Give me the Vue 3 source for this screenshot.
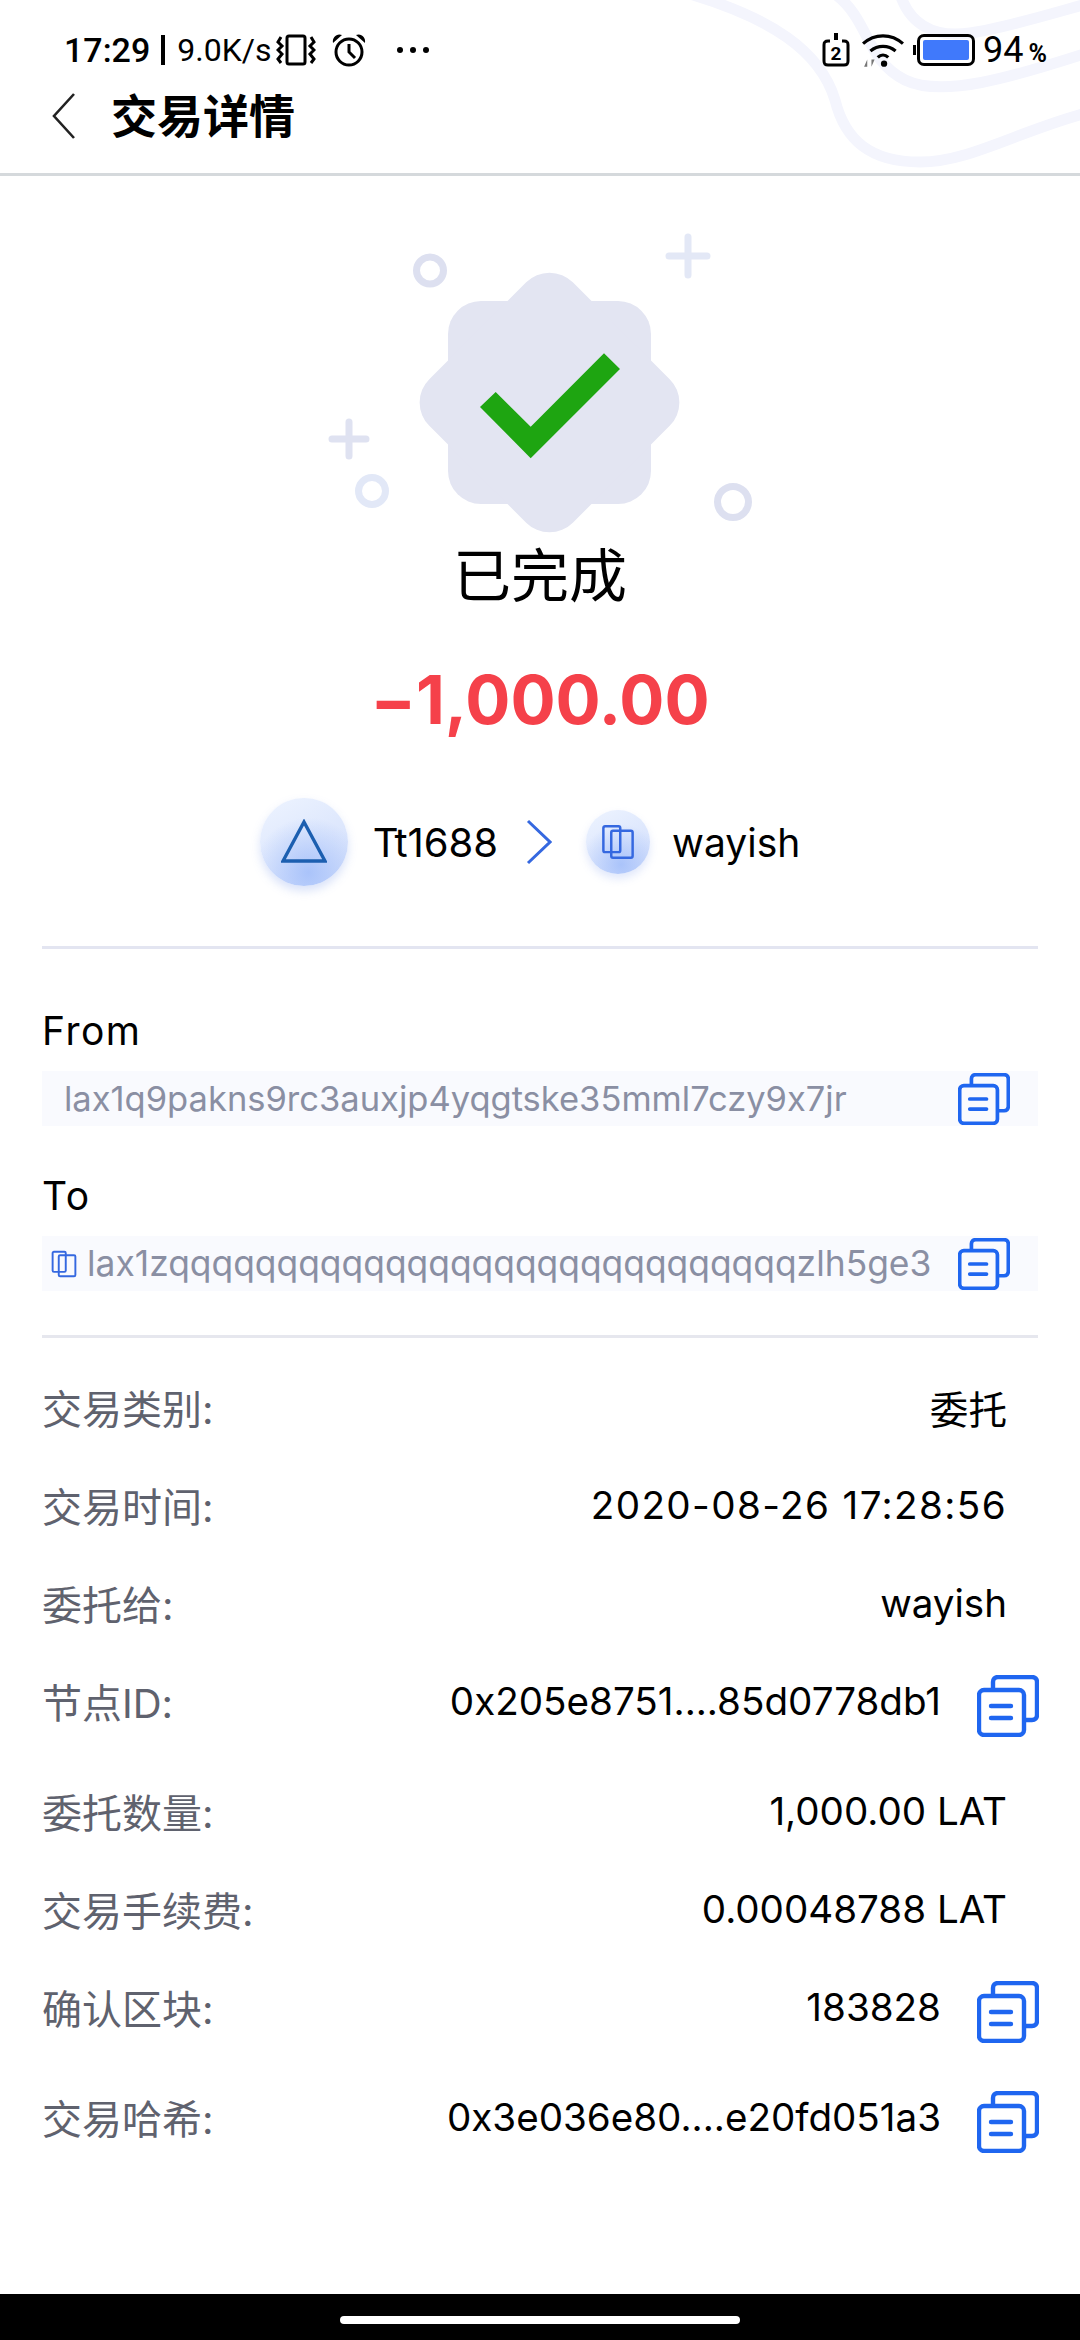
<template>
  <div class="page">
    <svg class="swirl" viewBox="0 0 400 176" aria-hidden="true">
      <path d="M10 -6C90 18 140 50 155 100C165 140 190 162 240 162C290 162 340 130 410 112" />
      <path d="M155 -6C190 20 185 60 225 80C262 98 330 78 410 52" />
      <path d="M220 -6C230 25 255 38 290 33C325 28 370 14 410 3" />
    </svg>

    <div class="status-bar">
      <div class="status-left">
        <span class="clock">17:29</span>
        <span class="pipe"></span>
        <span class="speed">9.0K/s</span>
        <svg class="ic-vibrate" viewBox="0 0 40 32">
          <rect x="11" y="2" width="18" height="28" rx="2" />
          <path d="M5 3L2 8L6 12L2 16L6 20L2 25L5 29M35 3L38 8L34 12L38 16L34 20L38 25L35 29" />
        </svg>
        <svg class="ic-alarm" viewBox="0 0 36 34">
          <circle cx="18" cy="19" r="13" />
          <path d="M18 11V19L24 25" />
          <path class="solid" d="M2 10C1 4 6 0 11 2ZM34 10C35 4 30 0 25 2Z" />
        </svg>
        <span class="dots"><i></i><i></i><i></i></span>
      </div>
      <div class="status-right">
        <svg class="ic-timer" viewBox="0 0 28 34">
          <path d="M8 8H6C3 8 2 9 2 12V28C2 31 3 32 6 32H22C25 32 26 31 26 28V12C26 9 25 8 22 8H20" />
          <path class="solid" d="M12 0H16V7H12Z" />
          <text x="14" y="27" text-anchor="middle">2</text>
        </svg>
        <svg class="ic-wifi" viewBox="0 0 40 32">
          <path d="M1 10C12 0 28 0 39 10M8 17C15 11 25 11 32 17M15 23C18 20 22 20 25 23" />
          <circle class="solid" cx="21" cy="29" r="3" />
          <path class="arrows" d="M5 32V25L2 32ZM9 25V32L12 25Z" />
        </svg>
        <div class="battery"><div class="battery-fill"></div></div>
        <span class="level">94</span>
        <span class="percent">%</span>
      </div>
    </div>

    <header class="title-bar">
      <svg class="back" viewBox="0 0 24 46"><path d="M22 1L2 23L22 45" /></svg>
      <h1>交易详情</h1>
    </header>

    <section class="hero">
      <svg class="hero-art" viewBox="320 225 440 315">
        <rect x="448" y="301" width="203" height="203" rx="33" fill="#e3e5f2" />
        <rect x="448" y="301" width="203" height="203" rx="33" fill="#e3e5f2" transform="rotate(45 549.5 402.5)" />
        <path d="M480 407L495.7 392L530.7 426.7L604 353.3L620 369L530.7 458.3Z" fill="#1ea511" />
        <circle cx="430" cy="270.5" r="13.5" class="ring" stroke="#dde0f0" />
        <circle cx="372" cy="491" r="13.5" class="ring" stroke="#e2e8f7" stroke-width="9" />
        <circle cx="733" cy="502" r="15.5" class="ring" stroke="#dde0f0" />
        <path d="M669 256H707M688 237V275" class="plus" stroke="#e3e8f6" />
        <path d="M332 439H366M349 422V456" class="plus" stroke="#dfe2f1" />
      </svg>
      <p class="state">已完成</p>
      <p class="amount">−1,000.00</p>
      <div class="parties">
        <div class="avatar big">
          <svg viewBox="0 0 46 46"><path d="M23 3L44 42H2Z" /></svg>
        </div>
        <span class="party-name from-name">Tt1688</span>
        <svg class="party-arrow" viewBox="0 0 26 46"><path d="M2 2L24 23L2 44" /></svg>
        <div class="avatar small">
          <svg viewBox="0 0 32 32"><use href="#node-mark" /></svg>
        </div>
        <span class="party-name to-name">wayish</span>
      </div>
    </section>

    <div class="rule"></div>

    <section class="addresses">
      <div class="addr-label">From</div>
      <div class="addr-box">
        <span class="addr-text from-addr">lax1q9pakns9rc3auxjp4yqgtske35mml7czy9x7jr</span>
        <svg class="copy addr-copy" viewBox="0 0 62 62"><use href="#copy-mark" /></svg>
      </div>
      <div class="addr-label to-label">To</div>
      <div class="addr-box">
        <svg class="node-inline" viewBox="0 0 32 32"><use href="#node-mark" /></svg>
        <span class="addr-text to-addr">lax1zqqqqqqqqqqqqqqqqqqqqqqqqqqqqqzlh5ge3</span>
        <svg class="copy addr-copy" viewBox="0 0 62 62"><use href="#copy-mark" /></svg>
      </div>
    </section>

    <div class="rule lower"></div>

    <section class="details">
      <div
        v-for="row in rows"
        :key="row.label"
        class="row"
        :class="{ 'has-copy': row.copy }"
      >
        <span class="row-label">{{ row.label }}</span>
        <span class="row-value" :class="{ 'is-date': row.date }">{{ row.value }}</span>
        <svg v-if="row.copy" class="copy row-copy" viewBox="0 0 62 62"><use href="#copy-mark" /></svg>
      </div>
    </section>

    <div class="nav-bar"><div class="home-pill"></div></div>

    <svg class="defs" width="0" height="0" aria-hidden="true">
      <defs>
        <g id="copy-mark" fill="none" stroke="#1f66f0" stroke-width="4.4" stroke-linejoin="round" stroke-linecap="round">
          <path d="M16 14V7C16 4 18 2 21 2H55C58 2 60 4 60 7V40C60 43 58 45 55 45H48" />
          <rect x="2" y="15" width="45" height="45" rx="5" />
          <path d="M14 31H34M14 43H34" />
        </g>
        <g id="node-mark" fill="none" stroke="#3568e0" stroke-width="2.2" stroke-linejoin="round">
          <rect x="3" y="2" width="15" height="23" rx="1.5" />
          <rect x="10" y="6" width="19" height="24" rx="1.5" />
        </g>
      </defs>
    </svg>
  </div>
</template>

<script setup>
const rows = [
  { label: "交易类别:", value: "委托" },
  { label: "交易时间:", value: "2020-08-26 17:28:56", date: true },
  { label: "委托给:", value: "wayish" },
  { label: "节点ID:", value: "0x205e8751....85d0778db1", copy: true },
  { label: "委托数量:", value: "1,000.00 LAT" },
  { label: "交易手续费:", value: "0.00048788 LAT" },
  { label: "确认区块:", value: "183828", copy: true },
  { label: "交易哈希:", value: "0x3e036e80....e20fd051a3", copy: true },
];
</script>

<style>
html,
body {
  margin: 0;
  background: #fff;
}
</style>

<style scoped>
.page {
  position: relative;
  width: 1080px;
  height: 2340px;
  overflow: hidden;
  display: flex;
  flex-direction: column;
  background: #fff;
  color: #000;
  font-family: "Inter", "Noto Sans CJK SC", sans-serif;
  font-variant-ligatures: none;
  font-feature-settings: "calt" 0;
}

/* 顶部背景装饰 */
.swirl {
  position: absolute;
  top: 0;
  right: 0;
  width: 400px;
  height: 176px;
}

.swirl path {
  fill: none;
  stroke: #f4f5fd;
  stroke-width: 11;
}

.status-bar {
  position: relative;
  height: 72px;
  padding: 30px 33px 0 64px;
  box-sizing: border-box;
  display: flex;
  justify-content: space-between;
}

.status-left,
.status-right {
  display: flex;
  align-items: center;
  height: 40px;
}

.clock {
  font: 500 34px "Roboto", sans-serif;
}

.pipe {
  width: 4px;
  height: 30px;
  margin: 0 12px 0 11px;
  background: #000;
}

.speed {
  font: 400 32px "Roboto", sans-serif;
}

.status-bar svg {
  fill: none;
  stroke: #000;
  stroke-width: 3;
}

.status-bar svg .solid {
  fill: #000;
  stroke: none;
}

.ic-vibrate {
  width: 40px;
  height: 32px;
  margin-left: 5px;
}

.ic-alarm {
  width: 36px;
  height: 34px;
  margin-left: 15px;
}

.dots {
  display: flex;
  gap: 7px;
  margin-left: 30px;
}

.dots i {
  width: 6px;
  height: 6px;
  border-radius: 50%;
  background: #000;
}

.ic-timer {
  width: 28px;
  height: 34px;
}

.ic-timer text {
  font: 700 19px "Roboto", sans-serif;
  fill: #000;
  stroke: none;
}

.ic-wifi {
  width: 42px;
  height: 34px;
  margin-left: 12px;
}

.status-bar svg .arrows {
  fill: #777;
  stroke: none;
}

.battery {
  position: relative;
  width: 58px;
  height: 32px;
  margin-left: 13px;
  padding: 3px;
  box-sizing: border-box;
  border: 3px solid #000;
  border-radius: 7px;
}

.battery::before {
  content: "";
  position: absolute;
  left: -7px;
  top: 8px;
  width: 3px;
  height: 10px;
  background: #000;
}

.battery-fill {
  height: 100%;
  border-radius: 2px;
  background: #4079fb;
}

.level {
  margin-left: 8px;
  font: 400 36px "Roboto", sans-serif;
}

.percent {
  margin: 6px 0 0 5px;
  font: 700 25px "Roboto", sans-serif;
}

.title-bar {
  position: relative;
  height: 104px;
  box-sizing: border-box;
  display: flex;
  align-items: center;
  padding: 0 0 14px 52px;
  border-bottom: 3px solid #d5d9dc;
}

.back {
  width: 24px;
  height: 46px;
  fill: none;
  stroke: #222;
  stroke-width: 2.6;
}

.title-bar h1 {
  margin: 0 0 0 35px;
  font-size: 46px;
  font-weight: 700;
  line-height: 60px;
}

.hero {
  display: flex;
  flex-direction: column;
  align-items: center;
}

.hero-art {
  width: 440px;
  height: 315px;
  margin-top: 49px;
  flex: none;
}

.ring {
  fill: none;
  stroke-width: 7;
}

.plus {
  fill: none;
  stroke-width: 7;
  stroke-linecap: round;
}

.state {
  margin: 4px 0 0;
  font-size: 58px;
  line-height: 64px;
}

.amount {
  margin: 51px 0 0;
  font-size: 67px;
  line-height: 82px;
  font-weight: 700;
  color: #f5414a;
}

.parties {
  display: flex;
  align-items: center;
  margin: 56px 20px 0 0;
  height: 90px;
}

.avatar {
  display: flex;
  align-items: center;
  justify-content: center;
  border-radius: 50%;
  background:
    radial-gradient(circle at 55% 85%, rgba(165, 192, 250, 0.9), transparent 62%),
    linear-gradient(150deg, #eef4ff, #cfdcfb);
}

.avatar.big {
  width: 88px;
  height: 88px;
  box-shadow: 0 5px 10px rgba(120, 150, 235, 0.28);
}

.avatar.big svg {
  width: 46px;
  height: 46px;
  fill: none;
  stroke: #1c5fb0;
  stroke-width: 3.4;
}

.avatar.small {
  width: 64px;
  height: 64px;
  box-shadow: 0 5px 9px rgba(120, 150, 235, 0.22);
}

.avatar.small svg {
  width: 36px;
  height: 36px;
}

.party-name {
  font-size: 40px;
}

.from-name {
  margin-left: 25px;
}

.party-arrow {
  width: 26px;
  height: 46px;
  margin: 0 34px 0 28px;
  fill: none;
  stroke: #3568e0;
  stroke-width: 3;
}

.to-name {
  margin-left: 22px;
  font-size: 39px;
}

.rule {
  height: 3px;
  margin: 59px 42px 0;
  background: #e3e5f1;
  flex: none;
}

.rule.lower {
  margin-top: 44px;
  background: #e6e7ee;
}

.addresses {
  padding: 0 42px;
}

.addr-label {
  margin-top: 57px;
  font-size: 39px;
  line-height: 50px;
  letter-spacing: 1.5px;
}

.to-label {
  margin-top: 45px;
}

.addr-box {
  display: flex;
  align-items: center;
  height: 55px;
  margin-top: 15px;
  background: #f9fafe;
}

.addr-text {
  color: #8a8fa3;
  white-space: nowrap;
}

.from-addr {
  margin-left: 22px;
  font-size: 34.5px;
}

.to-addr {
  font-size: 35.4px;
}

.node-inline {
  width: 28px;
  height: 28px;
  margin: 0 9px 0 8px;
  flex: none;
}

.copy {
  flex: none;
}

.addr-copy {
  width: 52px;
  height: 52px;
  margin: 0 28px 0 auto;
}

.details {
  padding: 20px 41px 0 42px;
}

.row {
  display: flex;
  align-items: center;
  height: 98px;
}

.row.has-copy {
  margin-bottom: 12px;
}

.row-label {
  font-size: 40px;
  color: #5f626e;
}

.row-value {
  margin: 0 32px 0 auto;
  font-size: 38.6px;
  white-space: nowrap;
}

/* 日期里的连字符在原字体中更宽 */
.row-value.is-date {
  letter-spacing: 1.4px;
}

.has-copy .row-value {
  margin-right: 36px;
}

.row-copy {
  width: 62px;
  height: 62px;
  margin-top: 9px;
}

.nav-bar {
  position: absolute;
  left: 0;
  right: 0;
  bottom: 0;
  height: 46px;
  background: #000;
}

.home-pill {
  width: 400px;
  height: 8px;
  margin: 22px auto 0;
  border-radius: 4px;
  background: #fff;
}

.defs {
  position: absolute;
}
</style>
